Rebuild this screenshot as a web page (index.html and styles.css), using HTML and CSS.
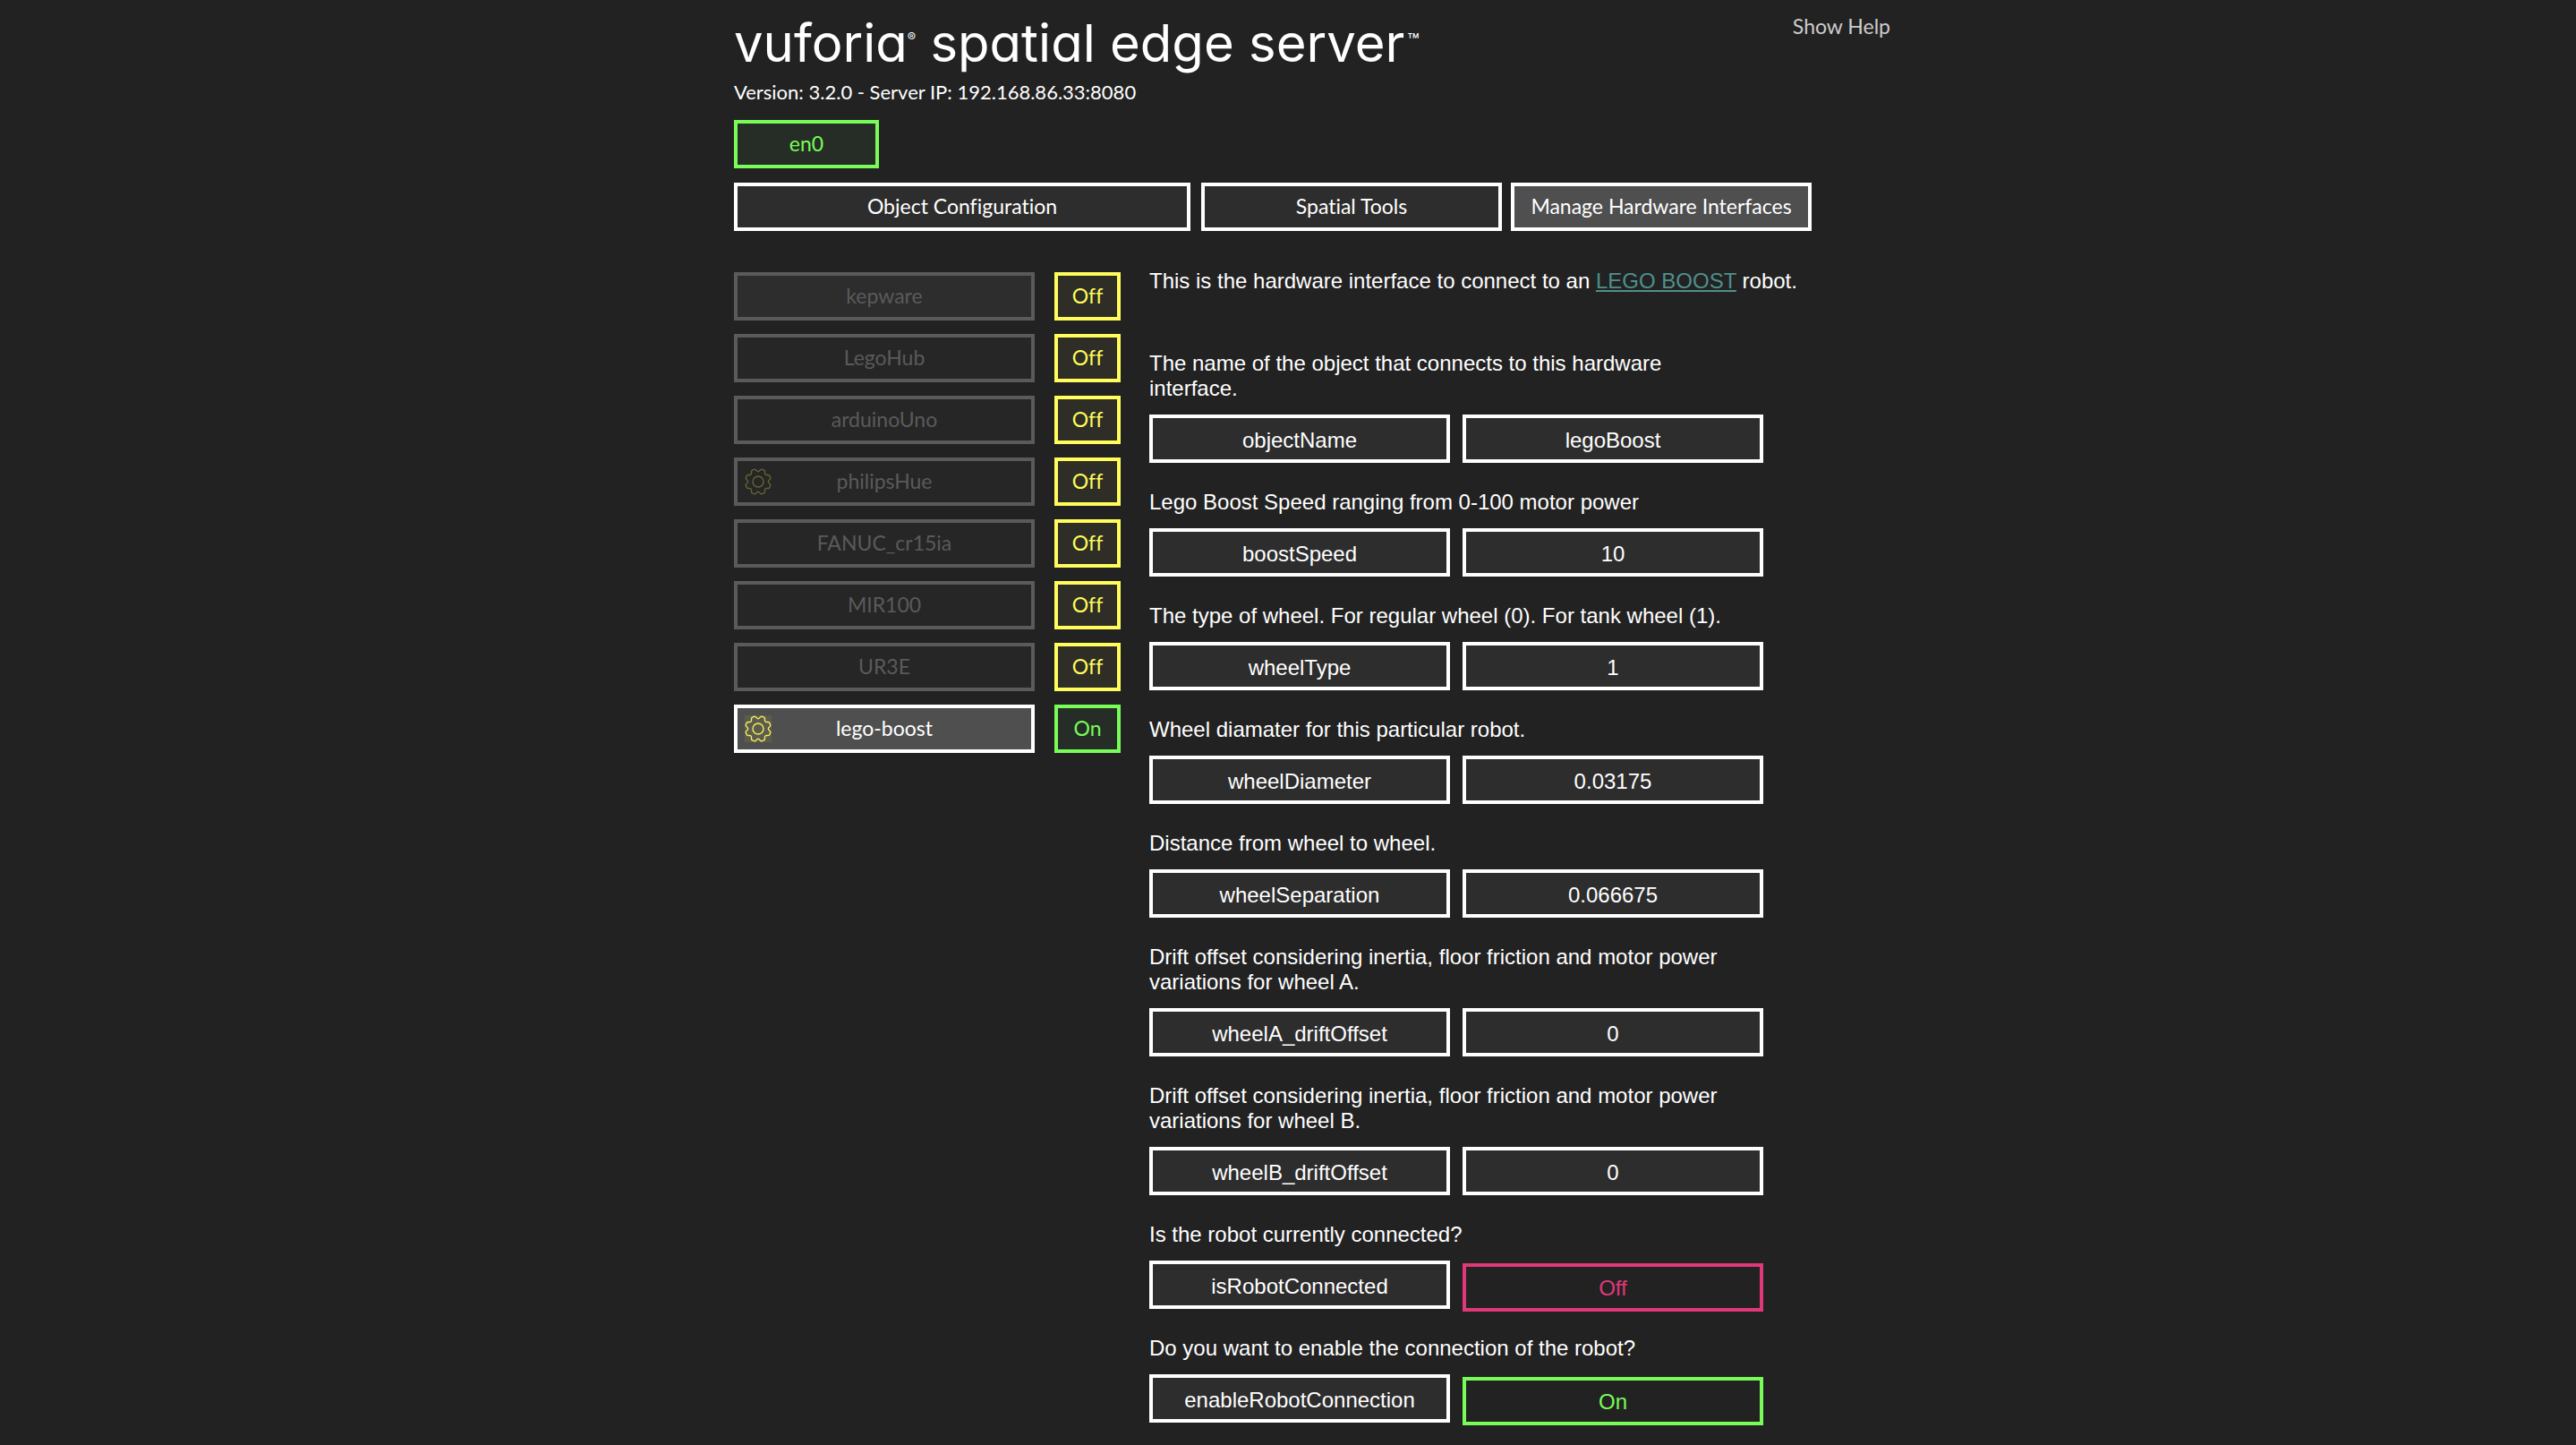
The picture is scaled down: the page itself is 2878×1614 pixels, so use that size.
FILE: index.html
```
<!DOCTYPE html>
<html lang="en">
<head>
<meta charset="utf-8">
<title>Spatial Edge Server</title>
<link rel="stylesheet" href="styles.css">
</head>
<body>
<svg class="defs" aria-hidden="true">
  <defs>
    <path id="tooth" d="M0-11.3C2-11.3 2-14 4.1-13.8L6.87-12.65C8.5-11.3 6.58-9.4 8-8"/>
    <g id="gear">
      <circle r="6"/>
      <use href="#tooth"/>
      <use href="#tooth" transform="rotate(45)"/>
      <use href="#tooth" transform="rotate(90)"/>
      <use href="#tooth" transform="rotate(135)"/>
      <use href="#tooth" transform="rotate(180)"/>
      <use href="#tooth" transform="rotate(225)"/>
      <use href="#tooth" transform="rotate(270)"/>
      <use href="#tooth" transform="rotate(315)"/>
    </g>
  </defs>
</svg>
<div class="page">
  <header class="header">
    <div class="brand">
      <h1 class="title">vuforia<span class="mark">®</span> spatial edge server<span class="mark trade">™</span></h1>
      <p class="version">Version: 3.2.0 - Server IP: 192.168.86.33:8080</p>
    </div>
    <a class="help" href="#help">Show Help</a>
  </header>
  <button class="box network on" type="button">en0</button>
  <nav class="tabs">
    <button class="box wide" type="button">Object Configuration</button>
    <button class="box" type="button">Spatial Tools</button>
    <button class="box selected" type="button">Manage Hardware Interfaces</button>
  </nav>
  <main class="content">
    <ul class="interfaces">
      <li><button class="box inactive hover" type="button">kepware</button><button class="box off" type="button">Off</button></li>
      <li><button class="box inactive" type="button">LegoHub</button><button class="box off" type="button">Off</button></li>
      <li><button class="box inactive" type="button">arduinoUno</button><button class="box off" type="button">Off</button></li>
      <li><button class="box inactive" type="button"><svg class="gear" viewBox="-15 -15 30 30" aria-hidden="true"><use href="#gear"/></svg>philipsHue</button><button class="box off" type="button">Off</button></li>
      <li><button class="box inactive" type="button">FANUC_cr15ia</button><button class="box off" type="button">Off</button></li>
      <li><button class="box inactive" type="button">MIR100</button><button class="box off" type="button">Off</button></li>
      <li><button class="box inactive" type="button">UR3E</button><button class="box off" type="button">Off</button></li>
      <li><button class="box selected" type="button"><svg class="gear" viewBox="-15 -15 30 30" aria-hidden="true"><use href="#gear"/></svg>lego-boost</button><button class="box on" type="button">On</button></li>
    </ul>
    <section class="settings">
      <p class="intro">This is the hardware interface to connect to an <a class="link" href="#lego-boost">LEGO BOOST</a> robot.</p>
      <div class="setting">
        <p class="about">The name of the object that connects to this hardware interface.</p>
        <label class="box" for="objectName">objectName</label><input class="box" id="objectName" value="legoBoost">
      </div>
      <div class="setting">
        <p class="about">Lego Boost Speed ranging from 0-100 motor power</p>
        <label class="box" for="boostSpeed">boostSpeed</label><input class="box" id="boostSpeed" value="10">
      </div>
      <div class="setting">
        <p class="about">The type of wheel. For regular wheel (0). For tank wheel (1).</p>
        <label class="box" for="wheelType">wheelType</label><input class="box" id="wheelType" value="1">
      </div>
      <div class="setting">
        <p class="about">Wheel diamater for this particular robot.</p>
        <label class="box" for="wheelDiameter">wheelDiameter</label><input class="box" id="wheelDiameter" value="0.03175">
      </div>
      <div class="setting">
        <p class="about">Distance from wheel to wheel.</p>
        <label class="box" for="wheelSeparation">wheelSeparation</label><input class="box" id="wheelSeparation" value="0.066675">
      </div>
      <div class="setting">
        <p class="about">Drift offset considering inertia, floor friction and motor power variations for wheel A.</p>
        <label class="box" for="wheelA">wheelA_driftOffset</label><input class="box" id="wheelA" value="0">
      </div>
      <div class="setting">
        <p class="about">Drift offset considering inertia, floor friction and motor power variations for wheel B.</p>
        <label class="box" for="wheelB">wheelB_driftOffset</label><input class="box" id="wheelB" value="0">
      </div>
      <div class="setting">
        <p class="about">Is the robot currently connected?</p>
        <label class="box" for="isRobotConnected">isRobotConnected</label><button class="box toggle no" id="isRobotConnected" type="button">Off</button>
      </div>
      <div class="setting">
        <p class="about">Do you want to enable the connection of the robot?</p>
        <label class="box" for="enableRobot">enableRobotConnection</label><button class="box toggle yes" id="enableRobot" type="button">On</button>
      </div>
    </section>
  </main>
</div>
</body>
</html>
```
FILE: styles.css
```
* {
  box-sizing: border-box;
}

body {
  margin: 0;
  background: #222;
  color: #fff;
  font: 23px/28px Lato, "Open Sans", sans-serif;
  font-variant-ligatures: none;
}

h1, p, ul {
  margin: 0;
  padding: 0;
}

.defs {
  position: absolute;
  width: 0;
  height: 0;
}

/* The main column is centred; the help link hangs past its right edge. */
.page {
  max-width: 1292px;
  margin-left: max(16px, calc(50% - 619px));
  padding: 12px 0 22px;
}

.header {
  display: flex;
  justify-content: space-between;
  align-items: flex-start;
  margin-bottom: 17px;
}

.title {
  margin-bottom: 5px;
  font: 400 58px/72px Inter, sans-serif;
  font-feature-settings: "cv11";
}

.mark {
  font-size: 14px;
  line-height: 0;
  vertical-align: 22px;
}

.trade {
  margin-left: 3px;
  font-size: 22px;
  vertical-align: 16px;
}

.version {
  font-size: 22px;
}

.help {
  padding-top: 3px;
  color: #ccc;
  text-decoration: none;
}

.box {
  position: relative;
  width: 336px;
  height: 54px;
  padding: 0 0 2px;
  border: 4px solid #fff;
  border-radius: 0;
  background: #2d2d2d;
  color: #fff;
  font: inherit;
  text-align: center;
}

.network {
  display: block;
  width: 162px;
  margin-bottom: 16px;
}

.tabs {
  display: flex;
  gap: 10px;
  margin-bottom: 42px;
}

.wide {
  width: 510px;
  margin-right: 2px;
}

.selected {
  background: #4f4f4f;
}

.inactive {
  border-color: #5a5a5a;
  background: #262626;
  color: #5a5a5a;
}

.hover {
  background: #2d2d2d;
}

.on {
  border-color: #78fc58;
  background: #262d26;
  color: #78fc58;
}

.off {
  border-color: #fffc5c;
  background: #2e2d26;
  color: #fffc5c;
}

.content {
  display: flex;
  gap: 32px;
  align-items: flex-start;
}

.interfaces {
  display: grid;
  gap: 15px;
  padding-top: 4px;
  list-style: none;
}

.interfaces li {
  display: flex;
  gap: 22px;
}

.interfaces .on,
.interfaces .off {
  width: 74px;
}

.gear {
  position: absolute;
  top: 8px;
  left: 8px;
  width: 30px;
  height: 30px;
  background: #fffc5c12;
  fill: none;
  stroke: #f4f055;
  stroke-width: 1.4;
}

.inactive .gear {
  background: none;
  opacity: 0.3;
}

.settings {
  font: 24px/28px "Liberation Sans", Arial, sans-serif;
}

.intro {
  margin-bottom: 64px;
  white-space: nowrap;
}

.link {
  color: #4f8f8c;
}

.setting {
  display: flex;
  flex-wrap: wrap;
  gap: 15px 14px;
  width: 686px;
  margin-bottom: 30px;
}

.setting:last-child {
  margin-bottom: 0;
}

.about {
  width: 660px;
}

.setting .box {
  padding: 4px 0 0;
  line-height: 42px;
}

.setting .toggle {
  top: 3px;
  padding: 2px 0 0;
  background: #222;
}

.no {
  border-color: #e03878;
  color: #e03878;
}

.yes {
  border-color: #78fc58;
  color: #78fc58;
}
```
